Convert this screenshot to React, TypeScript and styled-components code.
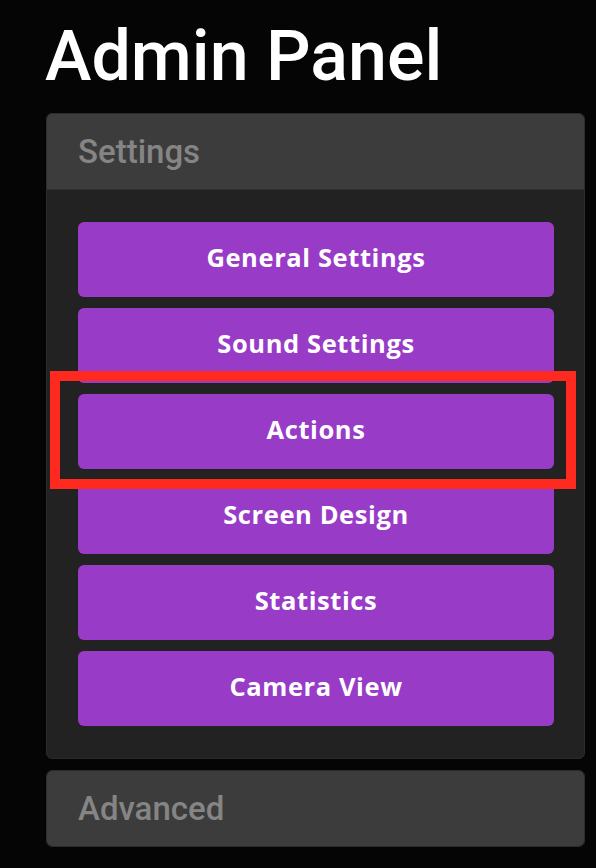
import React from "react";
import styled, { createGlobalStyle } from "styled-components";

const Global = createGlobalStyle`
  html, body { margin: 0; padding: 0; background: #050505; }
  body { font-family: Roboto, "Liberation Sans", Arial, sans-serif; }
`;

const Page = styled.div`
  width: 596px;
  height: 868px;
  box-sizing: border-box;
  padding: 16px 11px 0 46px;
  background: #050505;
  overflow: hidden;
`;

const Title = styled.h1`
  margin: 0 0 17px -1px;
  font-family: Roboto, "Liberation Sans", Arial, sans-serif;
  font-weight: 500;
  font-size: 70px;
  line-height: 80px;
  color: #ffffff;
`;

const Card = styled.section`
  box-sizing: border-box;
  width: 539px;
  border: 1px solid #2b2b2b;
  border-radius: 6px;
  overflow: hidden;
  background: #222222;
  & + & {
    margin-top: 11px;
  }
`;

const CardHeader = styled.div<{ $open?: boolean }>`
  box-sizing: border-box;
  height: ${(p) => (p.$open ? "76px" : "75px")};
  padding: 0 0 0 31px;
  display: flex;
  align-items: center;
  background: #3c3c3c;
  border-bottom: ${(p) => (p.$open ? "1px solid #2e2e2e" : "none")};
  color: #858585;
  font-size: 33px;
  font-weight: 500;
  font-family: Roboto, "Liberation Sans", Arial, sans-serif;
`;

const CardBody = styled.div`
  padding: 32px 30px 32px 31px;
  display: flex;
  flex-direction: column;
  gap: 11px;
`;

const Highlight = styled.div`
  margin: -23px -22px -21px -28px;
  padding: 13px 12px 10px 18px;
  border: 10px solid #ff2a1f;
  position: relative;
`;

const MenuButton = styled.button`
  display: flex;
  align-items: center;
  justify-content: center;
  width: 100%;
  height: 75px;
  border: none;
  border-radius: 6px;
  background: #983bc7;
  color: #ffffff;
  font-family: "Open Sans", Lato, sans-serif;
  font-weight: 700;
  font-size: 25.5px;
  letter-spacing: 0.6px;
  cursor: pointer;
  padding: 0 0 6px;
`;

const items = [
  "General Settings",
  "Sound Settings",
  "Actions",
  "Screen Design",
  "Statistics",
  "Camera View",
];

export default function App() {
  return (
    <Page>
      <Global />
      <Title>Admin Panel</Title>
      <Card>
        <CardHeader $open>Settings</CardHeader>
        <CardBody>
          {items.map((label) =>
            label === "Actions" ? (
              <Highlight key={label}>
                <MenuButton>{label}</MenuButton>
              </Highlight>
            ) : (
              <MenuButton key={label}>{label}</MenuButton>
            )
          )}
        </CardBody>
      </Card>
      <Card>
        <CardHeader>Advanced</CardHeader>
      </Card>
    </Page>
  );
}
